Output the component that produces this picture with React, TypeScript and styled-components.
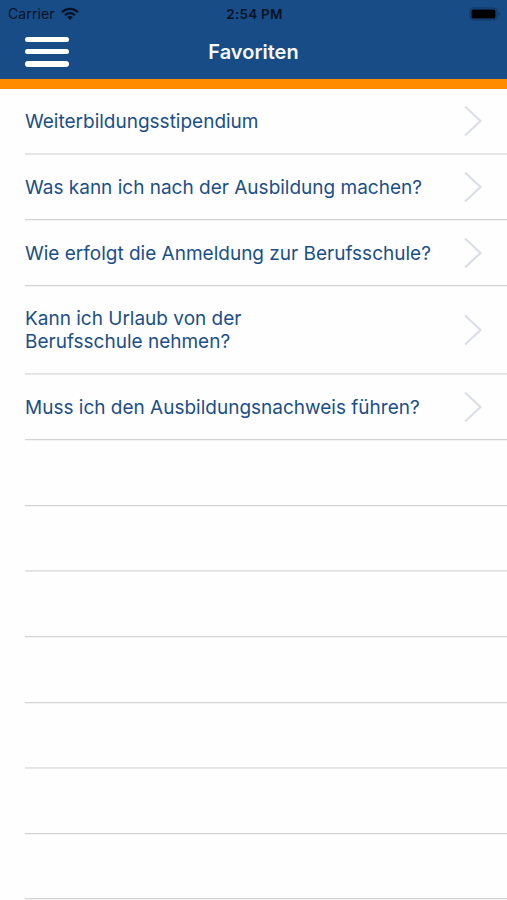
import React from "react";
import styled, { createGlobalStyle } from "styled-components";

const GlobalStyle = createGlobalStyle`
  * { box-sizing: border-box; }
  body { margin: 0; background: #fff; font-family: Inter, "Liberation Sans", sans-serif; }
`;

const Screen = styled.div`
  width: 507px;
  height: 900px;
  overflow: hidden;
  background: #fefefe;
`;

const Header = styled.header`
  height: 89px;
  background: #184c86;
  border-bottom: 10px solid #ff8c00;
`;

const StatusBar = styled.div`
  height: 28px;
  display: grid;
  grid-template-columns: 1fr auto 1fr;
  align-items: center;
  padding: 0 6px 0 8px;
  color: #061325;
  font-size: 14px;
  line-height: 28px;
`;

const Carrier = styled.div`
  display: flex;
  align-items: center;
  gap: 6px;
  letter-spacing: 0.12px;
`;

const Clock = styled.div`
  font-size: 13.5px;
  font-weight: 600;
  letter-spacing: 0.25px;
`;

const Battery = styled.svg`
  justify-self: end;
`;

const NavBar = styled.div`
  height: 51px;
  display: grid;
  grid-template-columns: 1fr auto 1fr;
  align-items: start;
  padding: 0 25px;
`;

const MenuButton = styled.button`
  width: 44px;
  height: 48px;
  padding: 9px 0 0;
  border: 0;
  background: none;
  display: flex;
  flex-direction: column;
  gap: 7px;
`;

const MenuBar = styled.span`
  width: 44px;
  height: 5.2px;
  border-radius: 3px;
  background: #fff;
`;

const Title = styled.h1`
  margin: 0;
  color: #f4f8ff;
  font-size: 20px;
  font-weight: 600;
  line-height: 48px;
`;

const List = styled.ul`
  margin: 0;
  padding: 0 0 0 25px;
  list-style: none;
`;

const Row = styled.li<{ $height: number }>`
  height: ${(p) => p.$height}px;
  display: flex;
  flex-direction: column;
`;

const RowBody = styled.div`
  flex: 1;
  display: flex;
  align-items: center;
  justify-content: space-between;
  padding-right: 24px;
`;

const Label = styled.span<{ $spacing: number }>`
  color: #1c4f88;
  font-size: 19px;
  line-height: 23px;
  white-space: pre-line;
  letter-spacing: ${(p) => p.$spacing}px;
`;

const Divider = styled.div<{ $top: string; $bottom: string }>`
  height: 2px;
  border-top: 1px solid ${(p) => p.$top};
  background: ${(p) => p.$bottom};
`;

const Chevron = () => (
  <svg width="20" height="32" viewBox="0 0 20 32" fill="none" stroke="#dcdfe8" strokeWidth="2.3">
    <path d="M2 1.5 17.5 16 2 30.5" />
  </svg>
);

const WifiIcon = () => (
  <svg width="18" height="14" viewBox="0 0 18 14" fill="none" stroke="#061325" strokeWidth="2.2">
    <path d="M1 5.2a11.4 11.4 0 0 1 16 0M4 8.2a7.2 7.2 0 0 1 10 0" />
    <path d="M9 13 6.2 10.3a4 4 0 0 1 5.6 0Z" fill="#061325" stroke="none" />
  </svg>
);

interface RowData {
  text?: string;
  height: number;
  spacing?: number;
  soft?: boolean;
}

const rows: RowData[] = [
  { text: "Weiterbildungsstipendium", height: 66, soft: true },
  { text: "Was kann ich nach der Ausbildung machen?", height: 66 },
  { text: "Wie erfolgt die Anmeldung zur Berufsschule?", height: 66 },
  { text: "Kann ich Urlaub von der\nBerufsschule nehmen?", height: 88, soft: true },
  { text: "Muss ich den Ausbildungsnachweis führen?", height: 66 },
  { height: 66 },
  { height: 65, soft: true },
  { height: 66 },
  { height: 66 },
  { height: 65, soft: true },
  { height: 66 },
  { height: 65 },
];

export default function App() {
  return (
    <Screen>
      <GlobalStyle />
      <Header>
        <StatusBar>
          <Carrier>
            Carrier
            <WifiIcon />
          </Carrier>
          <Clock>2:54 PM</Clock>
          <Battery width="32" height="14" viewBox="0 0 32 14">
            <rect x="1" y="1" width="27" height="12" rx="3" fill="none" stroke="#0e3764" />
            <rect x="2.5" y="2.5" width="24" height="9" rx="1.5" fill="#000" />
            <path d="M29.5 5v4q1.5-.5 1.5-2t-1.5-2" fill="#0e3764" />
          </Battery>
        </StatusBar>
        <NavBar>
          <MenuButton aria-label="Menü">
            <MenuBar />
            <MenuBar />
            <MenuBar />
          </MenuButton>
          <Title>Favoriten</Title>
        </NavBar>
      </Header>
      <List>
        {rows.map((row, i) => (
          <Row key={i} $height={row.height}>
            <RowBody>
              {row.text && (
                <>
                  <Label $spacing={row.spacing ?? 0}>{row.text}</Label>
                  <Chevron />
                </>
              )}
            </RowBody>
            <Divider $top={row.soft ? "#e3e3e4" : "#d4d4d6"} $bottom={row.soft ? "#e7e7e8" : "#f3f3f4"} />
          </Row>
        ))}
      </List>
    </Screen>
  );
}
